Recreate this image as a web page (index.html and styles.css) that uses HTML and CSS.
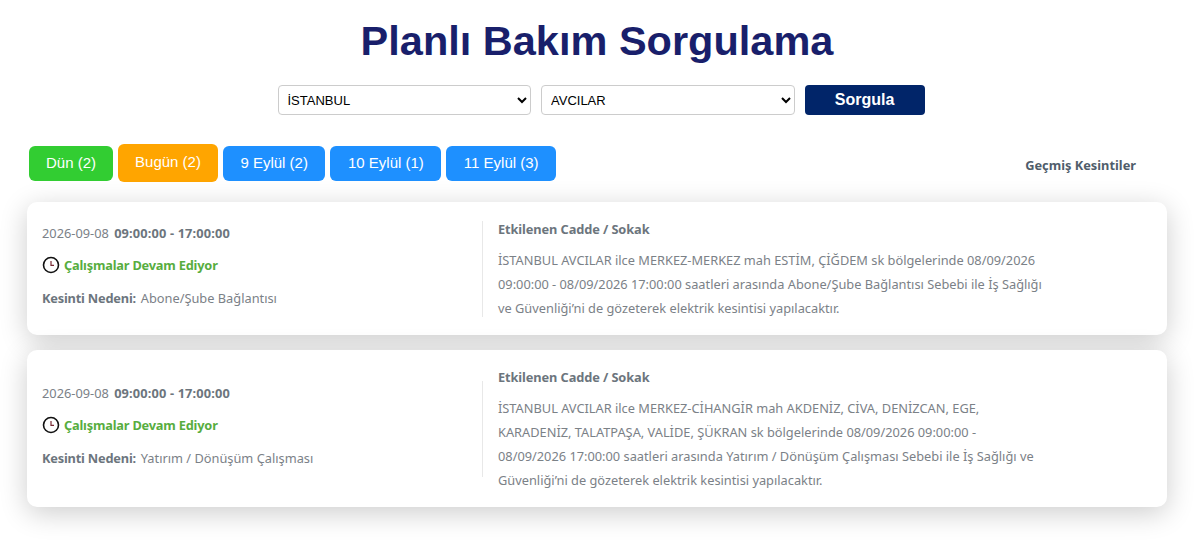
FILE: index.html
```html
<!DOCTYPE html>
<html lang="tr">
<head>
    <meta charset="UTF-8">
    <title>Planlı Bakım Sorgulama</title>
    <link rel="stylesheet" href="styles.css">
</head>
<body>

<h1 class="title">Planlı Bakım Sorgulama</h1>

<form class="query">
    <select class="query-select">
        <option>İSTANBUL</option>
    </select>
    <select class="query-select">
        <option>AVCILAR</option>
    </select>
    <button type="button" class="query-btn">Sorgula</button>
</form>

<div class="tabs">
    <button type="button" class="tab tab-green">Dün (2)</button>
    <button type="button" class="tab tab-orange">Bugün (2)</button>
    <button type="button" class="tab tab-blue">9 Eylül (2)</button>
    <button type="button" class="tab tab-blue">10 Eylül (1)</button>
    <button type="button" class="tab tab-blue">11 Eylül (3)</button>
    <a class="history" href="#">Geçmiş Kesintiler</a>
</div>

<div class="cards">
    <div class="card">
        <div class="card-left">
            <p class="when">2026-09-08 <b>09:00:00 - 17:00:00</b></p>
            <p class="status">
                <svg class="clock" viewBox="0 0 18 18" width="18" height="18">
                    <circle cx="9" cy="9" r="7.5" fill="#fff" stroke="#111" stroke-width="1.6"/>
                    <path d="M9 5V9.4H12" fill="none" stroke="#7a2b35" stroke-width="1.2"/>
                </svg>
                Çalışmalar Devam Ediyor
            </p>
            <p class="reason"><b>Kesinti Nedeni:</b> Abone/Şube Bağlantısı</p>
        </div>
        <div class="card-right">
            <h4>Etkilenen Cadde / Sokak</h4>
            <p>İSTANBUL AVCILAR ilce MERKEZ-MERKEZ mah ESTİM, ÇİĞDEM sk bölgelerinde 08/09/2026 09:00:00 - 08/09/2026 17:00:00 saatleri arasında Abone/Şube Bağlantısı Sebebi ile İş Sağlığı ve Güvenliği’ni de gözeterek elektrik kesintisi yapılacaktır.</p>
        </div>
    </div>

    <div class="card">
        <div class="card-left">
            <p class="when">2026-09-08 <b>09:00:00 - 17:00:00</b></p>
            <p class="status">
                <svg class="clock" viewBox="0 0 18 18" width="18" height="18">
                    <circle cx="9" cy="9" r="7.5" fill="#fff" stroke="#111" stroke-width="1.6"/>
                    <path d="M9 5V9.4H12" fill="none" stroke="#7a2b35" stroke-width="1.2"/>
                </svg>
                Çalışmalar Devam Ediyor
            </p>
            <p class="reason"><b>Kesinti Nedeni:</b> Yatırım / Dönüşüm Çalışması</p>
        </div>
        <div class="card-right">
            <h4>Etkilenen Cadde / Sokak</h4>
            <p>İSTANBUL AVCILAR ilce MERKEZ-CİHANGİR mah AKDENİZ, CİVA, DENİZCAN, EGE, KARADENİZ, TALATPAŞA, VALİDE, ŞÜKRAN sk bölgelerinde 08/09/2026 09:00:00 - 08/09/2026 17:00:00 saatleri arasında Yatırım / Dönüşüm Çalışması Sebebi ile İş Sağlığı ve Güvenliği’ni de gözeterek elektrik kesintisi yapılacaktır.</p>
        </div>
    </div>
</div>

</body>
</html>
```

FILE: styles.css
```css
body {
    margin: 0;
    padding-bottom: 42px;
    background-color: #fff;
    font-family: "Liberation Sans", Arial, sans-serif;
}
.title {
    margin: 0;
    padding: 17px 9px 0 0;
    height: 69px;
    box-sizing: border-box;
    text-align: center;
    font-size: 41.5px;
    line-height: 48px;
    font-weight: 700;
    color: #191f6b;
}
.query {
    display: flex;
    justify-content: center;
    gap: 10px;
    margin-top: 16px;
    padding-right: 1px;
}
.query-select {
    width: 253.5px;
    height: 30px;
    padding: 0 5px;
    border: 1px solid #ccc;
    border-radius: 4px;
    background-color: #fff;
    color: #000;
    font-family: "Liberation Sans", Arial, sans-serif;
    font-size: 13px;
}
.query-btn {
    width: 120px;
    height: 30px;
    padding: 0;
    border: 0;
    border-radius: 4px;
    background-color: #012569;
    color: #fff;
    font-family: "Liberation Sans", Arial, sans-serif;
    font-size: 16px;
    font-weight: 700;
}
.tabs {
    display: flex;
    align-items: center;
    gap: 5px;
    height: 38px;
    margin-top: 29px;
    padding-left: 29px;
}
.tab {
    height: 35px;
    padding: 0 17.5px 2px;
    border: 0;
    border-radius: 6px;
    color: #fff;
    font-family: "Liberation Sans", Arial, sans-serif;
    font-size: 15px;
}
.tab-green {
    padding: 0 17px 2px;
    background-color: #32cd32;
}
.tab-orange {
    height: 38px;
    padding: 0 17px 3px;
    background-color: #ffa500;
}
.tab-blue {
    background-color: #1e90ff;
}
.history {
    margin-left: auto;
    margin-right: 67px;
    margin-top: 4px;
    color: #4f5d6b;
    font-family: "Noto Sans", sans-serif;
    font-size: 12.8px;
    font-weight: 700;
    text-decoration: none;
}
.cards {
    display: flex;
    flex-direction: column;
    gap: 15px;
    margin: 20px 36px 0 27px;
}
.card {
    display: flex;
    align-items: center;
    padding: 18px 15px 15px;
    border-radius: 10px;
    background-color: #fff;
    box-shadow: 0 6px 28px rgba(0, 0, 0, 0.2);
    font-family: "Noto Sans", sans-serif;
    font-size: 12.8px;
    color: #7b8187;
}
.card b {
    color: #6c757d;
}
.card-left {
    width: 441px;
    height: 96px;
    flex-shrink: 0;
    margin-top: -3px;
    display: flex;
    flex-direction: column;
    justify-content: center;
    gap: 14.5px;
    padding-bottom: 7px;
    box-sizing: border-box;
    border-right: 1px solid #e8e8e8;
}
.card-left p {
    margin: 0;
    line-height: 18px;
}
.when b {
    margin-left: 2px;
    letter-spacing: 0.15px;
}
.status {
    display: flex;
    align-items: center;
    gap: 4px;
    color: #57ad40;
    font-weight: 700;
    letter-spacing: -0.2px;
}
.clock {
    flex-shrink: 0;
}
.reason b {
    margin-right: 1.5px;
    letter-spacing: -0.2px;
}
.card-right {
    width: 545px;
    padding-left: 15px;
}
.card-right h4 {
    margin: 0 0 10px;
    font-size: 12.8px;
    line-height: 18px;
    font-weight: 700;
    color: #6c757d;
    letter-spacing: -0.1px;
}
.card-right p {
    margin: 0;
    line-height: 24px;
}
```
